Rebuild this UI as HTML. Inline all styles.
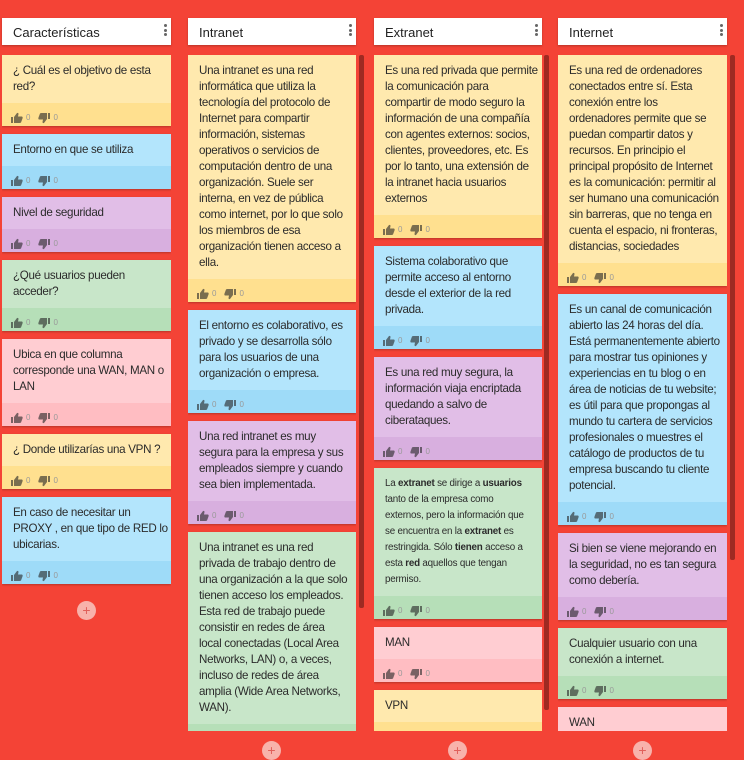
<!DOCTYPE html>
<html><head><meta charset="utf-8"><style>
*{margin:0;padding:0;box-sizing:border-box}
body{width:744px;height:752px;overflow:hidden;background:#f44336;font-family:"Liberation Sans",Arial,sans-serif;position:relative}
.hd{position:absolute;top:18px;height:27px;background:#fff;box-shadow:0 1px 2px rgba(0,0,0,.25);font-size:13px;color:#222;padding:7px 0 0 11px}
.kb{position:absolute;right:4px;top:6px;width:3px}
.kb i{display:block;width:3px;height:3px;background:#666;border-radius:50%;margin-bottom:1.5px}
.col{position:absolute;top:55px;height:676px;overflow:hidden}
.card{margin-bottom:8px;box-shadow:0 1px 2px rgba(0,0,0,.25)}
.tx{padding:8px 11px 8px;font-size:11.6px;letter-spacing:-0.3px;line-height:16px;color:#2b2b2b;white-space:nowrap;overflow:hidden}
.sm{font-size:9.8px;letter-spacing:-0.2px;padding-top:8px}
.sm b{font-weight:bold}
.ft{height:23px;padding:6px 0 0 9px;display:flex;align-items:center;gap:3px;font-size:8px;color:#999}
.ft svg{width:12px;height:12px;fill:rgba(40,40,40,.62)}
.ft span{margin-right:5px}
.y{background:#ffe9ae}.y .ft{background:#ffe08f}
.b{background:#b3e5fc}.b .ft{background:#9edbf8}
.p{background:#e1bee7}.p .ft{background:#d8afdf}
.g{background:#c8e6c9}.g .ft{background:#b6dfb8}
.k{background:#ffcdd2}.k .ft{background:#ffbdc2}
.sb{position:absolute;width:5px;background:#9e2a22;border-radius:2px}
.plus{position:absolute;width:19px;height:19px;border-radius:50%;background:#f8b2ab;color:#e0605a;font-size:14px;line-height:19px;text-align:center}
</style></head><body>

<div class="hd" style="left:2px;width:169px">Características<div class="kb"><i></i><i></i><i></i></div></div>
<div class="hd" style="left:188px;width:168px">Intranet<div class="kb"><i></i><i></i><i></i></div></div>
<div class="hd" style="left:374px;width:168px">Extranet<div class="kb"><i></i><i></i><i></i></div></div>
<div class="hd" style="left:558px;width:169px">Internet<div class="kb"><i></i><i></i><i></i></div></div>

<svg width="0" height="0" style="position:absolute"><defs>
<symbol id="up" viewBox="0 0 12 12"><rect x="0" y="5" width="2" height="6"/><path d="M3 5 L6 1 Q7.5 0.5 7.5 2 L7 4.5 H11 Q12 5 11.5 6.5 L10 10.5 Q9.5 11 8.5 11 H3Z"/></symbol>
<symbol id="dn" viewBox="0 0 12 12"><rect x="10" y="1" width="2" height="6"/><path d="M9 7 L6 11 Q4.5 11.5 4.5 10 L5 7.5 H1 Q0 7 0.5 5.5 L2 1.5 Q2.5 1 3.5 1 H9Z"/></symbol>
</defs></svg>

<div class="col" style="left:2px;width:169px;height:700px">
<div class="card y"><div class="tx">¿ Cuál es el objetivo de esta<br>red?</div><div class="ft"><svg><use href="#up"/></svg><span>0</span><svg><use href="#dn"/></svg><span>0</span></div></div>
<div class="card b"><div class="tx">Entorno en que se utiliza</div><div class="ft"><svg><use href="#up"/></svg><span>0</span><svg><use href="#dn"/></svg><span>0</span></div></div>
<div class="card p"><div class="tx">Nivel de seguridad</div><div class="ft"><svg><use href="#up"/></svg><span>0</span><svg><use href="#dn"/></svg><span>0</span></div></div>
<div class="card g"><div class="tx">¿Qué usuarios pueden<br>acceder?</div><div class="ft"><svg><use href="#up"/></svg><span>0</span><svg><use href="#dn"/></svg><span>0</span></div></div>
<div class="card k"><div class="tx">Ubica en que columna<br>corresponde una WAN, MAN o<br>LAN</div><div class="ft"><svg><use href="#up"/></svg><span>0</span><svg><use href="#dn"/></svg><span>0</span></div></div>
<div class="card y"><div class="tx">¿ Donde utilizarías una VPN ?</div><div class="ft"><svg><use href="#up"/></svg><span>0</span><svg><use href="#dn"/></svg><span>0</span></div></div>
<div class="card b"><div class="tx">En caso de necesitar un<br>PROXY , en que tipo de RED lo<br>ubicarias.</div><div class="ft"><svg><use href="#up"/></svg><span>0</span><svg><use href="#dn"/></svg><span>0</span></div></div>
</div>
<div class="plus" style="left:77px;top:601px">+</div>

<div class="col" style="left:188px;width:168px">
<div class="card y"><div class="tx">Una intranet es una red<br>informática que utiliza la<br>tecnología del protocolo de<br>Internet para compartir<br>información, sistemas<br>operativos o servicios de<br>computación dentro de una<br>organización. Suele ser<br>interna, en vez de pública<br>como internet, por lo que solo<br>los miembros de esa<br>organización tienen acceso a<br>ella.</div><div class="ft"><svg><use href="#up"/></svg><span>0</span><svg><use href="#dn"/></svg><span>0</span></div></div>
<div class="card b"><div class="tx">El entorno es colaborativo, es<br>privado y se desarrolla sólo<br>para los usuarios de una<br>organización o empresa.</div><div class="ft"><svg><use href="#up"/></svg><span>0</span><svg><use href="#dn"/></svg><span>0</span></div></div>
<div class="card p"><div class="tx">Una red intranet es muy<br>segura para la empresa y sus<br>empleados siempre y cuando<br>sea bien implementada.</div><div class="ft"><svg><use href="#up"/></svg><span>0</span><svg><use href="#dn"/></svg><span>0</span></div></div>
<div class="card g"><div class="tx">Una intranet es una red<br>privada de trabajo dentro de<br>una organización a la que solo<br>tienen acceso los empleados.<br>Esta red de trabajo puede<br>consistir en redes de área<br>local conectadas (Local Area<br>Networks, LAN) o, a veces,<br>incluso de redes de área<br>amplia (Wide Area Networks,<br>WAN).</div><div class="ft"><svg><use href="#up"/></svg><span>0</span><svg><use href="#dn"/></svg><span>0</span></div></div>
</div>
<div class="sb" style="left:359px;top:55px;height:553px"></div>

<div class="col" style="left:374px;width:168px">
<div class="card y"><div class="tx">Es una red privada que permite<br>la comunicación para<br>compartir de modo seguro la<br>información de una compañía<br>con agentes externos: socios,<br>clientes, proveedores, etc. Es<br>por lo tanto, una extensión de<br>la intranet hacia usuarios<br>externos</div><div class="ft"><svg><use href="#up"/></svg><span>0</span><svg><use href="#dn"/></svg><span>0</span></div></div>
<div class="card b"><div class="tx">Sistema colaborativo que<br>permite acceso al entorno<br>desde el exterior de la red<br>privada.</div><div class="ft"><svg><use href="#up"/></svg><span>0</span><svg><use href="#dn"/></svg><span>0</span></div></div>
<div class="card p"><div class="tx">Es una red muy segura, la<br>información viaja encriptada<br>quedando a salvo de<br>ciberataques.</div><div class="ft"><svg><use href="#up"/></svg><span>0</span><svg><use href="#dn"/></svg><span>0</span></div></div>
<div class="card g"><div class="tx sm">La <b>extranet</b> se dirige a <b>usuarios</b><br>tanto de la empresa como<br>externos, pero la información que<br>se encuentra en la <b>extranet</b> es<br>restringida. Sólo <b>tienen</b> acceso a<br>esta <b>red</b> aquellos que tengan<br>permiso.</div><div class="ft"><svg><use href="#up"/></svg><span>0</span><svg><use href="#dn"/></svg><span>0</span></div></div>
<div class="card k"><div class="tx">MAN</div><div class="ft"><svg><use href="#up"/></svg><span>0</span><svg><use href="#dn"/></svg><span>0</span></div></div>
<div class="card y"><div class="tx">VPN</div><div class="ft"><svg><use href="#up"/></svg><span>0</span><svg><use href="#dn"/></svg><span>0</span></div></div>
</div>
<div class="sb" style="left:544px;top:55px;height:655px"></div>

<div class="col" style="left:558px;width:169px">
<div class="card y"><div class="tx">Es una red de ordenadores<br>conectados entre sí. Esta<br>conexión entre los<br>ordenadores permite que se<br>puedan compartir datos y<br>recursos. En principio el<br>principal propósito de Internet<br>es la comunicación: permitir al<br>ser humano una comunicación<br>sin barreras, que no tenga en<br>cuenta el espacio, ni fronteras,<br>distancias, sociedades</div><div class="ft"><svg><use href="#up"/></svg><span>0</span><svg><use href="#dn"/></svg><span>0</span></div></div>
<div class="card b"><div class="tx">Es un canal de comunicación<br>abierto las 24 horas del día.<br>Está permanentemente abierto<br>para mostrar tus opiniones y<br>experiencias en tu blog o en<br>área de noticias de tu website;<br>es útil para que propongas al<br>mundo tu cartera de servicios<br>profesionales o muestres el<br>catálogo de productos de tu<br>empresa buscando tu cliente<br>potencial.</div><div class="ft"><svg><use href="#up"/></svg><span>0</span><svg><use href="#dn"/></svg><span>0</span></div></div>
<div class="card p"><div class="tx">Si bien se viene mejorando en<br>la seguridad, no es tan segura<br>como debería.</div><div class="ft"><svg><use href="#up"/></svg><span>0</span><svg><use href="#dn"/></svg><span>0</span></div></div>
<div class="card g"><div class="tx">Cualquier usuario con una<br>conexión a internet.</div><div class="ft"><svg><use href="#up"/></svg><span>0</span><svg><use href="#dn"/></svg><span>0</span></div></div>
<div class="card k"><div class="tx">WAN</div><div class="ft"><svg><use href="#up"/></svg><span>0</span><svg><use href="#dn"/></svg><span>0</span></div></div>
</div>
<div class="sb" style="left:730px;top:55px;height:505px"></div>

<div class="plus" style="left:262px;top:741px">+</div>
<div class="plus" style="left:448px;top:741px">+</div>
<div class="plus" style="left:633px;top:741px">+</div>
</body></html>
